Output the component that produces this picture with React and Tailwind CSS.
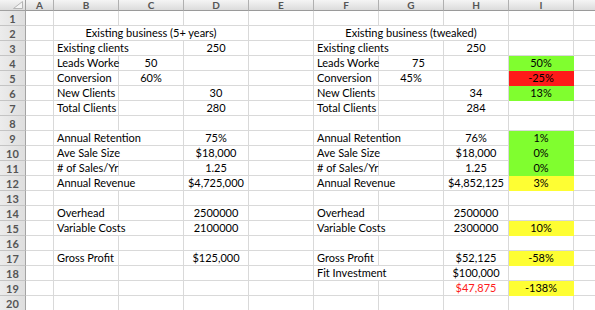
import React from "react";

const COLS = ["A", "B", "C", "D", "E", "F", "G", "H", "I", ""];

const GREEN = "bg-[#80fe2f] border-[#80fe2f]";
const RED = "bg-[#fe1a1a] border-[#fe1a1a]";
const YELLOW = "bg-[#fefe33] border-[#fefe33]";

const L = (c, t, span = 1) => ({ c, t, span, a: "left" });
const C = (c, t, span = 1, extra = {}) => ({ c, t, span, a: "center", ...extra });

const DATA = {
  2: [C(1, "Existing business (5+ years)", 3), C(5, "Existing business (tweaked)", 3)],
  3: [L(1, "Existing clients", 2), C(3, "250"), L(5, "Existing clients", 2), C(7, "250")],
  4: [L(1, "Leads Worke"), C(2, "50"), L(5, "Leads Worke"), C(6, "75", 1, { shift: true }), C(8, "50%", 1, { fill: GREEN })],
  5: [L(1, "Conversion"), C(2, "60%"), L(5, "Conversion"), C(6, "45%"), C(8, "-25%", 1, { fill: RED })],
  6: [L(1, "New Clients"), C(3, "30"), L(5, "New Clients"), C(7, "34"), C(8, "13%", 1, { fill: GREEN })],
  7: [L(1, "Total Clients"), C(3, "280"), L(5, "Total Clients"), C(7, "284")],
  9: [L(1, "Annual Retention", 2), C(3, "75%"), L(5, "Annual Retention", 2), C(7, "76%"), C(8, "1%", 1, { fill: GREEN })],
  10: [L(1, "Ave Sale Size", 2), C(3, "$18,000"), L(5, "Ave Sale Size", 2), C(7, "$18,000"), C(8, "0%", 1, { fill: GREEN })],
  11: [L(1, "# of Sales/Yr"), C(3, "1.25"), L(5, "# of Sales/Yr"), C(7, "1.25"), C(8, "0%", 1, { fill: GREEN })],
  12: [L(1, "Annual Revenue", 2), C(3, "$4,725,000"), L(5, "Annual Revenue", 2), C(7, "$4,852,125"), C(8, "3%", 1, { fill: YELLOW })],
  14: [L(1, "Overhead"), C(3, "2500000"), L(5, "Overhead"), C(7, "2500000")],
  15: [L(1, "Variable Costs", 2), C(3, "2100000"), L(5, "Variable Costs", 2), C(7, "2300000"), C(8, "10%", 1, { fill: YELLOW })],
  17: [L(1, "Gross Profit"), C(3, "$125,000"), L(5, "Gross Profit"), C(7, "$52,125"), C(8, "-58%", 1, { fill: YELLOW })],
  18: [L(5, "Fit Investment", 2), C(7, "$100,000")],
  19: [C(7, "$47,875", 1, { red: true }), C(8, "-138%", 1, { fill: YELLOW })],
};

function Row({ r }) {
  const defs = DATA[r] || [];
  const cells = [];
  let c = 0;
  while (c < 10) {
    const d = defs.find((x) => x.c === c);
    if (d) {
      const spanCls = d.span === 3 ? "col-span-3" : d.span === 2 ? "col-span-2" : "";
      const base = d.fill ? d.fill : "border-[#d9d9d9]";
      const align = d.a === "center" ? "justify-center" : "justify-start pl-[3px]";
      cells.push(
        <div
          key={c}
          className={`${spanCls} ${base} ${align} flex items-end border-r border-b whitespace-nowrap ${d.red ? "text-[#fe1a1a]" : "text-black"} ${d.shift ? "pl-[15px]" : ""}`}
        >
          <span className="leading-[14px]">{d.t}</span>
        </div>
      );
      c += d.span;
    } else {
      cells.push(<div key={c} className="border-r border-b border-[#d9d9d9]" />);
      c += 1;
    }
  }
  return (
    <>
      <div className="flex items-center justify-center border-r border-b border-r-[#a3a3a3] border-b-[#c4c4c4] bg-gradient-to-r from-[#ececec] to-[#dedede] text-[11px] font-bold text-[#555555] leading-none">
        {r}
      </div>
      {cells}
    </>
  );
}

export default function App() {
  const rows = Array.from({ length: 20 }, (_, i) => i + 1);
  return (
    <div
      className="h-[310px] w-[595px] overflow-hidden bg-white text-[11px]"
      style={{ fontFamily: "Lato, 'Open Sans', sans-serif" }}
    >
      <div className="grid w-[638px] grid-cols-[26px_28px_repeat(8,65px)_64px] grid-rows-[11px] auto-rows-[15px]">
        <div className="relative border-r border-b border-[#a0a0a0] bg-gradient-to-b from-[#f5f5f5] to-[#dcdcdc]">
          <svg className="absolute right-[2px] bottom-[1px]" width="10" height="8" viewBox="0 0 10 8">
            <polygon points="9.5,0.5 9.5,7.5 0.5,7.5" fill="#f4f4f4" stroke="#b5b5b5" strokeWidth="1" />
          </svg>
        </div>
        {COLS.map((l, i) => (
          <div
            key={i}
            className="flex items-center justify-center border-r border-b border-r-[#b0b0b0] border-b-[#9a9a9a] bg-gradient-to-b from-[#f5f5f5] to-[#dcdcdc] text-[10px] font-bold leading-none text-[#555555]"
          >
            {l}
          </div>
        ))}
        {rows.map((r) => (
          <Row key={r} r={r} />
        ))}
      </div>
    </div>
  );
}
